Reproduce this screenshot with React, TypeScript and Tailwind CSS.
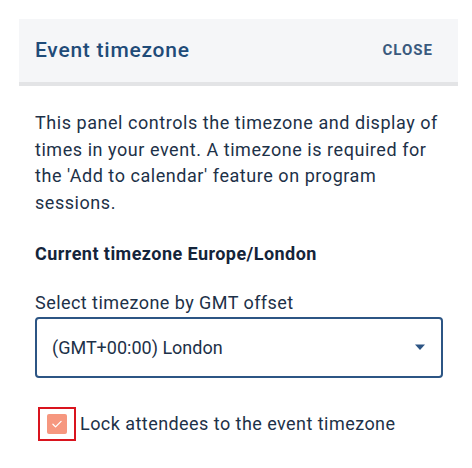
import React from "react";

export default function App() {
  return (
    <div className="min-h-[468px] w-[472px] bg-white pl-[19px] pt-[19px]" style={{ fontFamily: "Roboto, 'Liberation Sans', sans-serif" }}>
      <div className="w-[439px]">
        <div className="flex h-[67px] items-center justify-between border-b-4 border-[#e3e4e6] bg-[#f5f6f8] pl-[16px] pr-[25px]">
          <h2 className="text-[21px] font-medium tracking-[0.75px] text-[#1f4b78]">Event timezone</h2>
          <button className="text-[15px] font-bold tracking-[1px] text-[#3a5a7e]">CLOSE</button>
        </div>
        <div className="pl-[16px] pr-[15px] pt-[24px] text-[18px] tracking-[0.45px] text-[#1d3148]">
          <p className="leading-[26.7px] tracking-[0.55px]">
            This panel controls the timezone and display of times in your event. A timezone is required for the 'Add to calendar' feature on program sessions.
          </p>
          <p className="mt-[24px] font-bold leading-[26px] text-[#14243a]">Current timezone Europe/London</p>
          <label className="mt-[26px] block leading-[20px]">Select timezone by GMT offset</label>
          <div className="mt-[4px] flex h-[61px] items-center justify-between rounded-[4px] border-2 border-[#2c5584] pl-[15px] pr-[15px]">
            <span className="tracking-normal">(GMT+00:00) London</span>
            <svg width="12" height="7" viewBox="0 0 12 7">
              <path d="M1 0.5 L11 0.5 L6 6 Z" fill="#2c5584" />
            </svg>
          </div>
          <div className="mt-[29px] flex items-center">
            <div className="ml-[3px] flex h-[34px] w-[38px] items-center justify-center border-2 border-[#d9141e]">
              <div className="flex h-[20px] w-[20px] items-center justify-center rounded-[2px] bg-[#f6977f]">
                <svg width="14" height="14" viewBox="0 0 24 24" fill="none" stroke="white" strokeWidth="2.2" strokeLinecap="round" strokeLinejoin="round">
                  <path d="M5 12.5l4.5 4.5L19 7.5" />
                </svg>
              </div>
            </div>
            <span className="ml-[4px] leading-[26px]">Lock attendees to the event timezone</span>
          </div>
        </div>
      </div>
    </div>
  );
}
